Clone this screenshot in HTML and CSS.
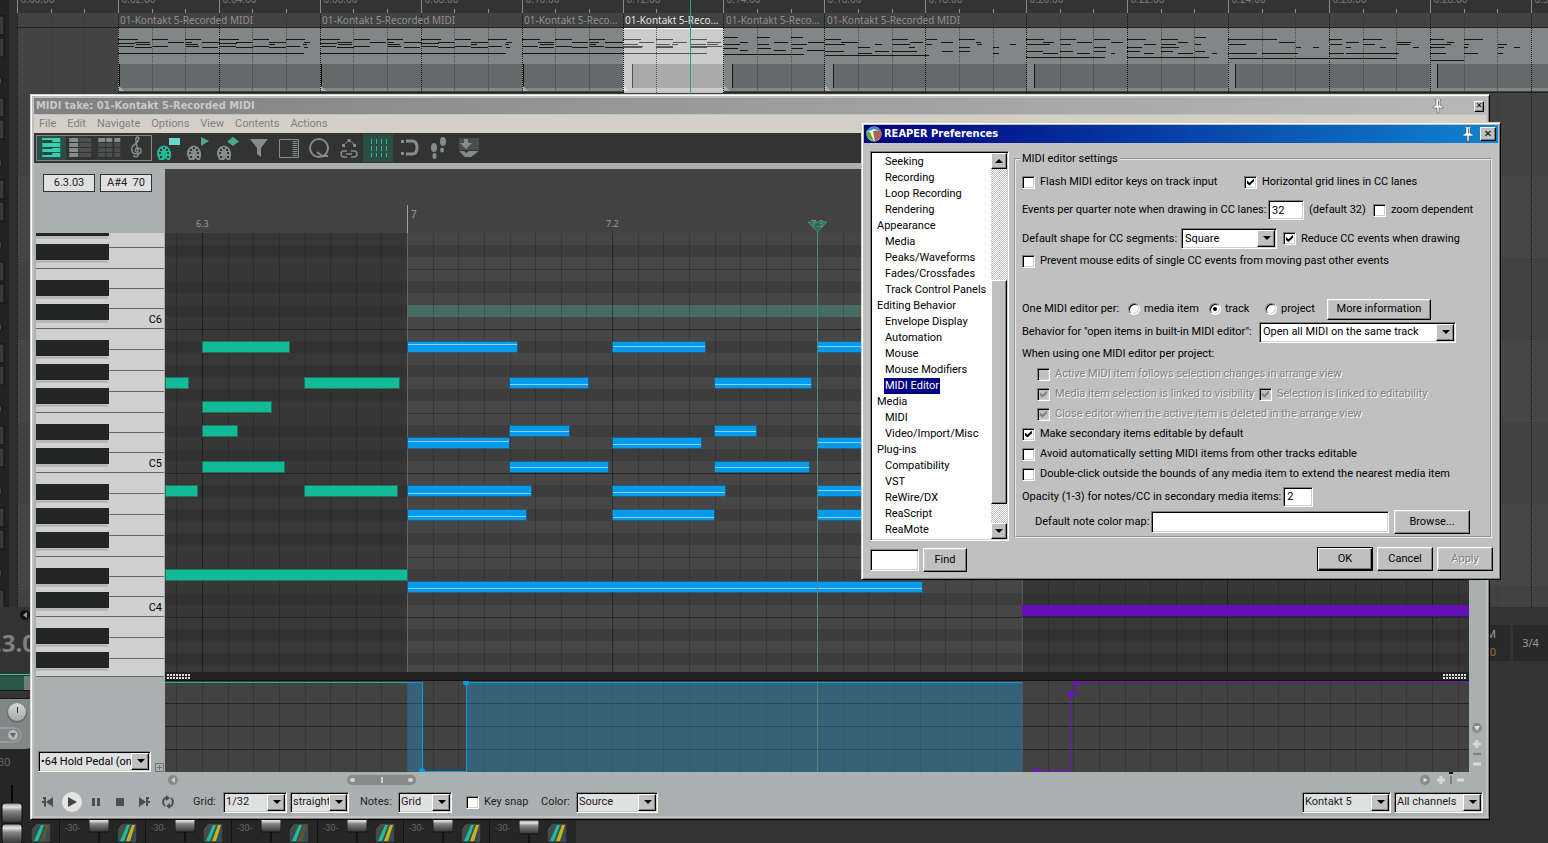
FILE: index.html
```html
<!DOCTYPE html>
<html lang="en">
<head>
<meta charset="utf-8">
<title>REAPER</title>
<link rel="stylesheet" href="styles.css">
</head>
<body>
<svg class="defs" width="0" height="0" aria-hidden="true">
  <defs>
    <linearGradient id="cap" x1="0" y1="0" x2="0" y2="1">
      <stop offset="0" stop-color="#8c8c8c"/><stop offset=".2" stop-color="#e6e6e6"/><stop offset=".4" stop-color="#8a8a8a"/>
      <stop offset=".6" stop-color="#6a6a6a"/><stop offset="1" stop-color="#333"/>
    </linearGradient>
    <linearGradient id="knob" x1="0" y1="0" x2="0" y2="1"><stop offset="0" stop-color="#d8d8d8"/><stop offset="1" stop-color="#a4a8a7"/></linearGradient>
    <symbol id="pin" viewBox="0 0 12 15"><path d="M3 0h6v1H8v5l3 2v1H7v5H5V9H1V8l3-2V1H3z" fill="#fff" stroke="#555" stroke-width=".6"/><path d="M6.500 1.500v5" stroke="#777"/></symbol>
    <symbol id="palette" viewBox="0 0 14 15"><path fill-rule="evenodd" d="M2 15l-1-3q-3-6 2-10 4-3 8 0 4 4 3 9l-1 4h-3l-1-2-2 2zM2 7h2v2H2zM3 4h2v2H3zM6 2h2v2H6zM9 4h2v2H9zM10 7h2v2h-2zM3 11h2v2H3zM10 11h2v2h-2z" fill="currentColor"/></symbol>
    <symbol id="routing" viewBox="0 0 20 20"><path d="M0 20V6l5-6h15v20z" fill="#444b4b" stroke="#111"/><path d="M10 2h3L7 18H3z" fill="#16c0a0"/><path d="M15 2h3L13 18H9z" fill="currentColor"/><path d="M18 6v9l-2 3h-2z" fill="#2f4d60"/></symbol>
    <symbol id="fader" viewBox="0 0 20 24"><path d="M10 0v24" stroke="#111" stroke-width="2"/><rect x="0" y="0" width="20" height="14" rx="1" fill="url(#cap)" stroke="#111"/></symbol>
  </defs>
</svg>

<main class="app">
  <div class="upper">
    <aside class="tcp" aria-label="Track panel"><svg class="fill" id="tcp"></svg></aside>
    <section class="arrange" aria-label="Arrange view"><svg class="fill" id="arrange"></svg></section>
  </div>
  <div class="lower">
    <aside class="master" aria-label="Master">
      <svg width="32" height="236">
        <circle cx="25" cy="8" r="5" fill="#111"/><path d="M27 5v6l-4-3z" fill="#999"/>
        <text x="-5" y="45" class="bigtime">.3.0</text>
        <path fill="#1bdc96" d="M0 67h32v1H0z"/><path fill="#2b5747" d="M0 69h24v14H0z"/><path fill="#747d7b" d="M24 69h8v14h-8z"/>
        <path fill="#181818" d="M0 83h32v1H0zM0 91h32v1H0z"/>
        <path fill="#262626" d="M0 142h32v94H0z"/><path fill="#808987" d="M0 92h32v45q-1 5-7 5H0z"/>
        <circle cx="17" cy="106" r="10" fill="#666d6c"/><circle cx="17" cy="105" r="9" fill="url(#knob)"/><path d="M17.500 100v6" stroke="#333"/>
        <path d="M0 121h14a7 7 0 0 1 0 14H0" fill="none" stroke="#a7aeac"/><circle cx="13" cy="128" r="5" fill="#b3b9b8"/><path d="M10 126h6l-3 5z" fill="#666"/>
        <text x="-2" y="159" class="dim">30</text>
        <path d="M12 178v20" stroke="#080808" stroke-width="2"/>
        <rect x="2" y="196" width="20" height="20" rx="3" fill="url(#cap)" stroke="#111"/><rect x="2" y="217" width="20" height="20" rx="3" fill="url(#cap)" stroke="#111"/>
      </svg>
    </aside>
    <div class="mixer" id="mixer"></div>
    <div class="signature"><div class="sigbox bpm">M<b>0</b></div><div class="sigbox">3/4</div></div>
  </div>

  <section class="window midi" aria-label="MIDI editor">
    <header class="titlebar inactive"><h1>MIDI take: 01-Kontakt 5-Recorded MIDI</h1><svg class="pin"><use href="#pin"/></svg><button class="close" aria-label="Close">✕</button></header>
    <nav class="menu"><a href="#">File</a><a href="#">Edit</a><a href="#">Navigate</a><a href="#">Options</a><a href="#">View</a><a href="#">Contents</a><a href="#">Actions</a></nav>
    <div class="tools">
      <div class="modes">
        <button class="on" aria-label="Piano roll"><svg viewBox="0 0 28 24"><path fill="#35d0b0" d="M5 2h18v19H5z"/><path fill="#24463f" d="M5 4h10v3H5zM5 11h10v2H5zM5 16h10v3H5zM15 6h8v1h-8zM15 11h8v1h-8zM15 16h8v1h-8z"/></svg></button>
        <button aria-label="Named notes"><svg viewBox="0 0 28 24"><path fill="#848d8b" d="M3 2h9v4H3zM3 7h9v4H3zM3 12h9v4H3zM3 17h9v4H3z"/><path fill="#4b4f4e" d="M13 2h12v4H13zM13 7h12v4H13zM13 12h12v4H13zM13 17h12v4H13z"/></svg></button>
        <button aria-label="Event list"><svg viewBox="0 0 28 24"><path fill="#848d8b" d="M4 2h7v4H4zM12 2h6v4h-6zM20 2h6v4h-6z"/><path fill="#4b4f4e" d="M4 7h7v4H4zM12 7h6v4h-6zM20 7h6v4h-6zM4 12h7v4H4zM12 12h6v4h-6zM20 12h6v4h-6zM4 17h7v4H4zM12 17h6v4h-6zM20 17h6v4h-6z"/></svg></button>
        <button aria-label="Notation"><svg viewBox="0 0 28 24"><path fill="none" stroke="#848d8b" stroke-width="1.500" d="M14 16c-3 0-2-4 0-4 5 0 5 6 0 6-7 0-7-7-2-10 3-2 5-7 2-7-4 0 2 15 1 18-1 3-5 2-4 0"/></svg></button>
      </div>
      <button class="green" aria-label="Color by velocity"><svg viewBox="0 0 30 28"><use href="#palette" x="4" y="11" width="14" height="15"/><path fill="#6ad8c4" d="M16 4h11v7H16z"/></svg></button>
      <button aria-label="Color by channel"><svg viewBox="0 0 30 28"><use href="#palette" x="4" y="11" width="14" height="15"/><path fill="#4ba68e" d="M18 3l8 4-8 5z"/></svg></button>
      <button aria-label="Color by pitch"><svg viewBox="0 0 30 28"><use href="#palette" x="4" y="11" width="14" height="15"/><path fill="#4ba68e" d="M20 3l6 4.500-6 4.500-6-4.500z"/></svg></button>
      <button aria-label="Filter"><svg viewBox="0 0 30 28"><path fill="currentColor" d="M7 5h18l-7 9v9l-4-3v-6z"/></svg></button>
      <button aria-label="Properties"><svg viewBox="0 0 30 28"><path fill="none" stroke="currentColor" d="M6.500 5.500h19v18h-19z"/><path stroke="currentColor" stroke-dasharray="1 1" stroke-width="5" d="M22 7v15"/></svg></button>
      <button aria-label="Quantize"><svg viewBox="0 0 30 28"><g fill="none" stroke="currentColor" stroke-width="2"><circle cx="16" cy="14" r="9"/><path d="M14 18l5 4h6"/></g></svg></button>
      <button aria-label="Humanize"><svg viewBox="0 0 30 28"><g fill="none" stroke="currentColor" stroke-width="1.500"><path d="M12 10l4-4 5 4" stroke-width="1"/><path d="M14 23h-3a3 3 0 0 1 0-6h3M18 17h3a3 3 0 0 1 0 6h-3M13 20h6"/></g><path fill="currentColor" d="M9 10h3v3H9zM14.500 5h3v3h-3zM20 10h3v3h-3z"/></svg></button>
      <button class="on" aria-label="Grid"><svg viewBox="0 0 30 28"><path fill="none" stroke="#20bd98" stroke-dasharray="5 2" d="M8.500 5v18M13.500 5v18M18.500 5v18M23.500 5v18"/></svg></button>
      <button aria-label="Snap"><svg viewBox="0 0 30 28"><path fill="none" stroke="currentColor" stroke-width="3" d="M13 7h6q5 0 5 6.500t-5 6.500h-6"/><path fill="currentColor" d="M8 6h3v3H8zM8 18h3v3H8z"/></svg></button>
      <button aria-label="Step input"><svg viewBox="0 0 30 28"><g fill="currentColor"><ellipse cx="11" cy="13.500" rx="3" ry="4.500"/><ellipse cx="11.500" cy="22" rx="2" ry="3"/><ellipse cx="20" cy="7.500" rx="3" ry="4.500"/><ellipse cx="19" cy="16" rx="2" ry="2.500"/></g></svg></button>
      <button aria-label="Dock"><svg viewBox="0 0 30 28"><path fill="#4a4d4d" d="M6 4h20v12H6z"/><path fill="currentColor" d="M11 5h4v4h4l-6 6-6-6h4zM6 17h5l2 2 3-2h10l-8 6h-6z"/></svg></button>
    </div>
    <div class="editor">
      <div class="side">
        <div class="readout"><output>6.3.03</output><output>A#4&nbsp; 70</output></div>
        <svg id="keys" width="129" height="444"></svg>
        <div class="lane"><span class="combo"><select aria-label="CC lane"><option>•64 Hold Pedal (on</option></select></span><svg width="9" height="9"><path d="M.5.5h8v8h-8zM4.500 2v5M2 4.500h5" fill="none" stroke="#6f7575"/></svg></div>
      </div>
      <div class="canvas">
        <svg id="roll" height="503"></svg>
        <div class="divider"><i></i><i></i></div>
        <svg id="cc" height="91"></svg>
        <div class="hscroll"><svg width="10" height="10"><circle cx="5" cy="5" r="5" fill="#858b8a"/><path d="M7 2v6L3 5z" fill="#cdd1d0"/></svg>
          <div class="thumb"><i></i><b></b><i></i></div>
          <svg class="zoomer" width="44" height="16"><circle cx="5" cy="8" r="5" fill="#858b8a"/><path d="M3.500 5.500v5L7.500 8z" fill="#dfe2e1"/><path d="M17 8h8M21 4v8M37 8h8" stroke="#d6d9d8" stroke-width="3"/><path d="M29 0h4v2h-4z" fill="#111"/><path d="M31 4v8" stroke="#7d8382" stroke-width="2"/></svg></div>
      </div>
      <div class="vscroll"><svg width="12" height="46"><circle cx="6" cy="5" r="5" fill="#858b8a"/><path d="M3 3h6L6 8z" fill="#dfe2e1"/><path d="M2 21h8M6 17v8M2 41h8" stroke="#d6d9d8" stroke-width="3"/><path d="M2 31h8" stroke="#7d8382" stroke-width="2"/></svg></div>
    </div>
    <footer class="bar">
      <div class="play">
        <button aria-label="Start"><svg viewBox="0 0 24 24"><path fill="#4b4f4f" d="M10 12l7-5v10zM10 7.500v9H8v-9zM7 7h3v2H7zM6 11h2v2H6z"/></svg></button>
        <button aria-label="Play"><svg viewBox="0 0 24 24"><circle cx="12" cy="12" r="10" fill="#e3e5e4"/><path fill="#444" d="M8 7l9 5-9 5z"/></svg></button>
        <button aria-label="Pause"><svg viewBox="0 0 24 24"><path fill="#4b4f4f" d="M8 8h3v8H8zM13 8h3v8h-3z"/></svg></button>
        <button aria-label="Stop"><svg viewBox="0 0 24 24"><path fill="#4b4f4f" d="M8 8h8v8H8z"/></svg></button>
        <button aria-label="End"><svg viewBox="0 0 24 24"><path fill="#4b4f4f" d="M7 7l7 5-7 5zM14 8h2v8h-2zM14 7h3v2h-3zM16 11h2v2h-2z"/></svg></button>
        <button aria-label="Repeat"><svg viewBox="0 0 24 24"><path fill="none" stroke="#4b4f4f" stroke-width="2" d="M9 16a5 5 0 0 1 1-8.500M15 8a5 5 0 0 1-1 8.500"/><path fill="#4b4f4f" d="M10 5l4 3-4 3zM14 13v6l-4-3z"/></svg></button>
      </div>
      <label class="l-grid" for="g">Grid:</label><span class="combo w63"><select id="g"><option>1/32</option></select></span>
      <span class="combo w59"><select aria-label="Grid type"><option>straight</option></select></span>
      <label class="l-notes" for="n">Notes:</label><span class="combo w54"><select id="n"><option>Grid</option></select></span>
      <label class="check snap"><input type="checkbox">Key snap</label>
      <label class="l-color" for="c">Color:</label><span class="combo w82"><select id="c"><option>Source</option></select></span>
      <span class="combo w89 push"><select aria-label="Track"><option>Kontakt 5</option></select></span>
      <span class="combo w89"><select aria-label="Channel"><option>All channels</option></select></span>
    </footer>
  </section>

  <section class="window prefs" role="dialog" aria-label="REAPER Preferences">
    <header class="titlebar"><svg class="logo" viewBox="0 0 16 16"><circle cx="8" cy="8" r="7.500" fill="#e8f0f0"/><path fill="#2e8fc4" d="M1 4q7-7 14 0l-1 1-6-2-5 2z"/><path fill="#5cae2c" d="M0 5l4 1 4 9.500Q0 14 0 5z"/><path fill="#b0605a" d="M7 5l8-1q3 8-6 11.500z"/></svg><h2>REAPER Preferences</h2><svg class="pin"><use href="#pin"/></svg><button class="close" aria-label="Close">✕</button></header>
    <div class="content">
      <div class="tree">
        <ul>
          <li class="sub"><a href="#">Seeking</a></li><li class="sub"><a href="#">Recording</a></li><li class="sub"><a href="#">Loop Recording</a></li><li class="sub"><a href="#">Rendering</a></li>
          <li><a href="#">Appearance</a></li><li class="sub"><a href="#">Media</a></li><li class="sub"><a href="#">Peaks/Waveforms</a></li><li class="sub"><a href="#">Fades/Crossfades</a></li><li class="sub"><a href="#">Track Control Panels</a></li>
          <li><a href="#">Editing Behavior</a></li><li class="sub"><a href="#">Envelope Display</a></li><li class="sub"><a href="#">Automation</a></li><li class="sub"><a href="#">Mouse</a></li><li class="sub"><a href="#">Mouse Modifiers</a></li><li class="sub"><a href="#" class="selected">MIDI Editor</a></li>
          <li><a href="#">Media</a></li><li class="sub"><a href="#">MIDI</a></li><li class="sub"><a href="#">Video/Import/Misc</a></li>
          <li><a href="#">Plug-ins</a></li><li class="sub"><a href="#">Compatibility</a></li><li class="sub"><a href="#">VST</a></li><li class="sub"><a href="#">ReWire/DX</a></li><li class="sub"><a href="#">ReaScript</a></li><li class="sub"><a href="#">ReaMote</a></li>
        </ul>
        <div class="scrollbar"><button class="up" aria-label="Up"></button><div class="grip"></div><button class="down" aria-label="Down"></button></div>
      </div>
      <fieldset>
        <legend>MIDI editor settings</legend>
        <div class="row two"><label class="check"><input type="checkbox">Flash MIDI editor keys on track input</label><label class="check"><input type="checkbox" checked>Horizontal grid lines in CC lanes</label></div>
        <div class="row tall events"><label for="ev">Events per quarter note when drawing in CC lanes:</label><input class="text" id="ev" value="32"><span class="hint">(default 32)</span><label class="check"><input type="checkbox">zoom dependent</label></div>
        <div class="row shape"><label for="sh">Default shape for CC segments:</label><span class="combo"><select id="sh"><option>Square</option></select></span><label class="check"><input type="checkbox" checked>Reduce CC events when drawing</label></div>
        <div class="row spaced"><label class="check"><input type="checkbox">Prevent mouse edits of single CC events from moving past other events</label></div>
        <div class="row per"><span>One MIDI editor per:</span><label class="radio"><input type="radio" name="per">media item</label><label class="radio"><input type="radio" name="per" checked>track</label><label class="radio"><input type="radio" name="per">project</label><button class="btn">More information</button></div>
        <div class="row behavior"><label for="bh">Behavior for "open items in built-in MIDI editor":</label><span class="combo"><select id="bh"><option>Open all MIDI on the same track</option></select></span></div>
        <div class="row">When using one MIDI editor per project:</div>
        <div class="row indent"><label class="check off"><input type="checkbox" disabled>Active MIDI item follows selection changes in arrange view</label></div>
        <div class="row indent two"><label class="check off"><input type="checkbox" checked disabled>Media item selection is linked to visibility</label><label class="check off"><input type="checkbox" checked disabled>Selection is linked to editability</label></div>
        <div class="row indent"><label class="check off"><input type="checkbox" checked disabled>Close editor when the active item is deleted in the arrange view</label></div>
        <div class="row"><label class="check"><input type="checkbox" checked>Make secondary items editable by default</label></div>
        <div class="row"><label class="check"><input type="checkbox">Avoid automatically setting MIDI items from other tracks editable</label></div>
        <div class="row"><label class="check"><input type="checkbox">Double-click outside the bounds of any media item to extend the nearest media item</label></div>
        <div class="row mid opacity"><label for="op">Opacity (1-3) for notes/CC in secondary media items:</label><input class="text" id="op" value="2"></div>
        <div class="row mid map"><label for="cm">Default note color map:</label><input class="text" id="cm"><button class="btn">Browse...</button></div>
      </fieldset>
    </div>
    <footer class="actions"><input class="text find" aria-label="Find text"><button class="btn findbtn">Find</button><button class="btn default">OK</button><button class="btn">Cancel</button><button class="btn" disabled>Apply</button></footer>
  </section>
</main>
<script src="app.js"></script>
</body>
</html>
```
FILE: styles.css
```css
* { box-sizing: border-box; }
body { margin: 0; background: #333; font: 11px/14px Roboto, "Liberation Sans", sans-serif; color: #000; }
button, select, input { font: inherit; color: inherit; margin: 0; }
a { color: inherit; text-decoration: none; }
svg { display: block; }
.defs { position: absolute; }
.app { position: relative; min-height: 100vh; display: flex; flex-direction: column; overflow: hidden; }
.upper { display: flex; flex: 1; min-height: 607px; }
.tcp { width: 17px; background: #2e2e2e; }
.arrange { flex: 1; min-width: 0; background: #434343; }
.fill { width: 100%; height: 100%; }
.lower { display: flex; height: 236px; background: #333; }
.master { width: 31px; overflow: hidden; }
.mixer { align-self: flex-end; display: flex; height: 24px; }
.bigtime { font: bold 24px "Noto Sans", sans-serif; fill: #808080; }
.dim { font: 11px Roboto, sans-serif; fill: #666; }
.strip { display: flex; align-items: flex-start; gap: 6px; width: 86px; height: 24px; background: #262626; border-top: 1px solid #111; color: #666; font: 9px/14px Roboto, sans-serif; }
.strip span { width: 24px; padding: 1px 0 0 5px; margin-left: 2px; border-left: 1px solid #111; height: 24px; white-space: nowrap; }
.strip.end { width: 29px; }
.routing { color: #c6b41c; }
.muted .routing { color: #5a5634; }
.signature { margin-left: auto; display: flex; gap: 3px; padding-top: 18px; color: #999; font: 11px/36px "Noto Sans", sans-serif; }
.sigbox { width: 35px; height: 36px; background: #292929; text-align: center; }
.bpm { width: 20px; text-align: left; line-height: 18px; overflow: hidden; direction: rtl; padding-right: 14px; }
.bpm b { display: block; color: #a66a30; font-weight: 400; }

.window { position: absolute; border: 1px solid; border-color: #d4d0c8 #000 #000 #d4d0c8; background: #c0c0c0; box-shadow: inset 1px 1px #fff, inset -1px -1px #808080; }
.titlebar { display: flex; align-items: center; height: 18px; padding: 0 2px; color: #fff; background: linear-gradient(90deg, #000080, #1084d0); }
.titlebar h1, .titlebar h2 { margin: 0; flex: 1; font: bold 11px/16px "DejaVu Sans Condensed", "DejaVu Sans", sans-serif; }
.titlebar.inactive { height: 16px; color: #c8c8c8; background: linear-gradient(90deg, #808080, #b8b8b8); }
.pin { width: 12px; height: 15px; margin-right: 6px; }
.inactive .pin { margin-right: 30px; }
.logo { width: 16px; height: 16px; margin-right: 2px; }
.close { width: 16px; height: 14px; padding: 0; font: bold 10px/10px "DejaVu Sans", sans-serif; color: #000; background: #c0c0c0; border: 1px solid; border-color: #fff #000 #000 #fff; box-shadow: inset -1px -1px #808080; }
.inactive .close { width: 10px; height: 11px; font-size: 8px; line-height: 8px; }

.midi { left: 30px; top: 94px; right: 58px; padding: 3px; background: #c0c0c0; }
.menu { display: flex; gap: 11px; height: 19px; padding: 0 5px; background: #d4d0c8; color: #808080; line-height: 17px; border-top: 1px solid #c0c0c0; }
.tools { display: flex; align-items: center; height: 30px; padding-left: 2px; background: #333; color: #848d8b; }
.tools button { width: 30px; height: 28px; padding: 0; border: 0; background: none; }
.tools svg { width: 100%; height: 100%; }
.tools .on { background: #2b4d46; }
.tools .green { color: #1fbb97; }
.modes { display: flex; width: 116px; height: 26px; margin-right: 1px; border: 1px solid #7f8a88; }
.tools .modes button { flex: 1; width: auto; height: 24px; }
.editor { display: grid; grid-template-columns: 129px 1fr 17px; padding: 6px 0 0 2px; background: #aab0b0; }
.side { display: flex; flex-direction: column; min-width: 0; }
.readout { display: flex; gap: 5px; height: 64px; padding: 5px 7px; }
.readout output { width: 52px; height: 18px; border: 1px solid #333; background: #dfe1e0; text-align: center; line-height: 16px; white-space: pre; color: #222; }
.lane { display: flex; gap: 4px; align-items: flex-end; margin-top: auto; padding: 0 0 16px 2px; }
.lane .combo { width: 113px; }
.canvas { min-width: 0; }
#roll, #cc { width: 100%; background: #424242; }
.divider { display: flex; justify-content: space-between; align-items: center; height: 9px; padding: 0 2px; background: #222; border-bottom: 1px solid #111; }
.divider i { width: 24px; height: 5px; background: repeating-linear-gradient(90deg, transparent 0 2px, #222 2px 3px), linear-gradient(#ddd 2px, #222 2px 3px, #ddd 3px); }
.hscroll { display: flex; align-items: center; height: 16px; padding: 0 5px 0 3px; }
.thumb { display: flex; align-items: center; justify-content: space-between; width: 69px; height: 10px; margin-left: 169px; padding: 0 3px; border-radius: 5px; background: #858b8a; }
.thumb i { width: 5px; height: 4px; border-radius: 2px; background: #d0d3d2; }
.thumb b { width: 2px; height: 6px; background: #d0d3d2; }
.zoomer { margin-left: auto; }
.vscroll { display: flex; align-items: flex-end; padding: 0 0 19px 2px; }
.bar { display: flex; align-items: center; height: 28px; padding: 0 0 0 2px; background: #aab0b0; color: #222; white-space: nowrap; }
.play { display: flex; }
.play button { width: 24px; height: 24px; padding: 0; border: 0; background: none; }
.l-grid { width: 43px; padding-left: 13px; }
.l-notes { width: 46px; padding-left: 8px; }
.l-color { width: 47px; padding-left: 12px; }
.snap { width: 63px; margin-left: 14px; }
.bar .combo { margin-right: 3px; }
.bar .combo.w54 { margin-right: 0; }
.w63 { width: 64px; } .w59 { width: 59px; } .w54 { width: 54px; } .w82 { width: 82px; } .w89 { width: 89px; }
.bar .push { margin-left: auto; }

.combo { position: relative; display: inline-block; height: 21px; }
.combo select, .text { width: 100%; height: 100%; appearance: none; border-radius: 0; border: 1px solid; border-color: #808080 #fff #fff #808080; box-shadow: inset 1px 1px #000, inset -1px -1px #d4d0c8; background: #fff; padding: 0 17px 0 3px; overflow: hidden; }
.midi .combo select { background: #dfe1e0; padding: 0 14px 0 2px; }
.combo::before { content: ""; position: absolute; right: 2px; top: 2px; bottom: 2px; width: 16px; background: #c0c0c0; border: 1px solid; border-color: #fff #000 #000 #fff; box-shadow: inset -1px -1px #808080; pointer-events: none; }
.combo::after { content: ""; position: absolute; right: 6px; top: 8px; border: 4px solid transparent; border-top-color: #000; border-bottom: 0; pointer-events: none; }
.text { width: auto; height: 20px; padding: 0 3px; }
.check, .radio { display: flex; align-items: center; gap: 5px; white-space: nowrap; }
.radio { gap: 4px; }
.check input, .radio input { flex: none; appearance: none; width: 13px; height: 13px; background: #fff; border: 1px solid; border-color: #808080 #fff #fff #808080; box-shadow: inset 1px 1px #000, inset -1px -1px #d4d0c8; }
.check input:checked::before { content: ""; display: block; width: 7px; height: 7px; margin: 2px; background: #000; clip-path: polygon(0 30%, 35% 60%, 100% 0, 100% 40%, 35% 100%, 0 70%); }
.check input:disabled { background: #c0c0c0; }
.check input:disabled:checked::before { background: #808080; }
.radio input { width: 12px; height: 12px; border-radius: 50%; }
.radio input:checked::before { content: ""; display: block; width: 4px; height: 4px; margin: 3px; border-radius: 50%; background: #000; }
.off { color: #808080; text-shadow: 1px 1px #fff; }
.btn { height: 24px; padding: 0; background: #c0c0c0; border: 1px solid; border-color: #fff #000 #000 #fff; box-shadow: inset -1px -1px #808080, inset 1px 1px #d4d0c8; }
.btn:disabled { color: #808080; text-shadow: 1px 1px #fff; }
.default { border: 1px solid #000; box-shadow: inset 1px 1px #fff, inset -1px -1px #000, inset -2px -2px #808080; }

.prefs { left: 861px; top: 122px; width: 640px; padding: 2px; }
.content { display: grid; grid-template-columns: 139px 1fr; gap: 5px; padding: 8px 6px 0; }
.tree { display: flex; justify-content: space-between; height: 390px; padding: 1px; background: #fff; border: 1px solid; border-color: #808080 #fff #fff #808080; box-shadow: inset 1px 1px #000, inset -1px -1px #d4d0c8; }
.tree ul { list-style: none; margin: 0; padding: 1px 0 0 4px; line-height: 16px; white-space: nowrap; }
.tree li { height: 16px; }
.tree .sub { padding-left: 8px; }
.tree a { display: inline-block; padding: 0 1px; }
.tree .selected { background: #000080; color: #fff; }
.scrollbar { display: flex; flex-direction: column; width: 16px; background: repeating-conic-gradient(#c0c0c0 0 25%, #fff 0 50%) 0 0 / 2px 2px; }
.scrollbar button, .grip { width: 16px; height: 16px; padding: 0; background: #c0c0c0; border: 1px solid; border-color: #fff #000 #000 #fff; box-shadow: inset -1px -1px #808080; }
.scrollbar button::before { content: ""; display: block; width: 0; margin: auto; border: 4px solid transparent; }
.scrollbar .up::before { border-bottom-color: #000; border-top: 0; }
.scrollbar .down::before { border-top-color: #000; border-bottom: 0; }
.scrollbar .grip { height: 224px; margin: 111px 0 auto; }
fieldset { min-width: 0; height: 387px; margin: 0; padding: 5px 6px 0; border: 2px groove #e8e8e8; }
legend { padding: 0 2px; margin-left: -2px; height: 16px; line-height: 16px; }
.row { display: grid; align-items: center; justify-content: start; height: 20px; white-space: nowrap; }
.two { grid-template-columns: 222px auto; }
.tall { height: 36px; }
.events { grid-template-columns: 246px 36px 69px auto; }
.hint { padding-left: 5px; }
.shape { grid-template-columns: 159px 96px auto; }
.shape .check { margin-left: 6px; }
.spaced { height: 26px; margin-bottom: 24px; }
.per { grid-template-columns: 106px 81px 56px 62px 104px; height: 22px; }
.per .btn { height: 21px; }
.behavior { grid-template-columns: 237px 197px; height: 24px; }
.indent { padding-left: 15px; }
.mid { height: 25px; }
.opacity { grid-template-columns: max-content 30px; gap: 2px; }
.map { padding-left: 13px; grid-template-columns: 116px 1fr 76px; justify-content: stretch; padding-right: 14px; }
.map .text { height: 22px; margin-right: 5px; min-width: 0; }
.actions { display: flex; align-items: flex-start; gap: 4px; padding: 6px 5px 5px 6px; }
.actions .btn { width: 56px; }
.actions .find, .actions .findbtn { margin-top: 1px; }
.actions .findbtn { width: 44px; margin-right: auto; }
.actions .find { width: 49px; height: 22px; margin-top: 2px; }
```
FILE: app.js
```js
const el = id => document.getElementById(id);
const rect = (x, y, w, h, fill, extra = '') => `<rect x="${x}" y="${y}" width="${w}" height="${h}" fill="${fill}" ${extra}/>`;
const line = (x1, y1, x2, y2, c, extra = '') => `<path d="M${x1} ${y1}L${x2} ${y2}" stroke="${c}" ${extra}/>`;

/* Track panel: one button pair and one knob per track */
let s = rect(0, 0, 9, '100%', '#222');
for (let y = 16; y < 600; y += 82) {
  s += rect(-3, y, 7, 19, '#3a3a3a', 'stroke="#111"') + rect(-3, y + 22, 7, 19, '#3a3a3a', 'stroke="#111"');
  s += `<circle cx="-3" cy="${y + 65}" r="5" fill="#444" stroke="#111"/>`;
}
el('tcp').innerHTML = s;

/* Arrange view, origin at the left edge of the timeline */
const X0 = 17, BEAT = 33.64;
s = '';
for (let y = 94, i = 0; y < 607; y += 82, i++) s += rect(0, y, '100%', 82, i % 2 ? '#464646' : '#424242');
s += rect(0, 0, '100%', 13, '#333') + rect(0, 13, '100%', 14, '#424242');
const items = [[118, 202, '01-Kontakt 5-Recorded MIDI', 119], [320, 202, '01-Kontakt 5-Recorded MIDI', 321], [522, 101, '01-Kontakt 5-Reco...', 523],
  [623, 101, '01-Kontakt 5-Reco...', 632], [724, 101, '01-Kontakt 5-Reco...', 732], [825, 1400, '01-Kontakt 5-Recorded MIDI', 833]];
s += rect(101, 27, '100%', 65, '#7f8886');
items.forEach(([x, w, t, cc], i) => {
  const sel = i === 3;
  x -= X0;
  if (sel) s += rect(x, 27, w, 66, '#cbcccb');
  s += rect(cc - X0, 64, w - (cc - X0 - x), 24, sel ? '#a9aaa9' : '#646a69') + rect(cc - X0, 64, 1, 24, sel ? '#555' : '#151515');
  s += `<path d="M${x} 92v-7l7 7z" fill="${sel ? '#e6e6e6' : '#aab0af'}"/>`;
});
[1027, 1228, 1430].forEach(x => { s += rect(x - X0, 64, 7, 24, '#7f8886') + rect(x + 7 - X0, 64, 1, 24, '#151515'); });
const loop = '39:0-20,34-50,67-83,101-121,135-151,168-187;42:17-32,50-66,67-74,84-101,118-135,151-168,186-192;43:0-17,101-119;44:18-32,67-80,151-157,185-189;46:0-16,34-50,67-81,101-118,135-151,168-182;47:17-34,84-100,118-135,151-168,186-190;53:0-186';
const short = '39:0-18,33-50,67-83;42:16-32,50-66,67-77,83-101;44:18-32,67-74;46:0-16,33-50,67-82;47:17-32,50-66,83-101;53:0-101';
const sel = '39:0-18,33-50,67-84;42:16-31,50-64,84-98;44:0-15,33-47,49-55,67-83,84-95;46:0-20,33-50,67-85,84-99;47:0-19,33-50,67-84;53:0-84';
const next = '37:0-14,33-46,67-79;42:16-24,50-64,84-100;44:0-16,33-45,67-83;48:0-14,33-47,67-79;50:16-24,50-62,83-101;54:0-80';
const tail = '39:0-16,67-83,101-112,134-150;42:16-33,85-98,116-128,151-156;44:0-20,50-57,67-85,101-107,152-157,185-191;47:33-45,84-90,134-145,168-174;51:0-19,50-64,67-92,117-128,134-145;53:33-47,168-174;55:0-104';
const far = '39:0-18,34-50,68-84,101-120,135-152,202-251,303-316,337-356,404-418,438-457;42:17-28,51-66,85-97,152-162,253-269,320-333,371-385,421-428;37:169-180;44:0-24,34-45,118-130,135-150,169-175,202-220,303-316,337-349,371-384,404-425,438-443,472-481;47:68-80,101-116,135-153,270-275,287-293,320-325,354-360,387-393,404-419,438-442,472-478,488-494;51:0-17,34-47,68-80,101-114,135-147,169-179;53:17-32,51-64,85-89,118-128,152-167,186-191,202-231,236-272,303-318,320-373,404-420,438-452,472-477;57:0-79,101-183;58:202-370;60:404-438';
[[118, loop], [320, loop], [522, short], [623, sel], [724, next], [825, tail], [1026, far]].forEach(([x, data]) =>
  data.split(';').forEach(r => {
    const [y, segs] = r.split(':');
    segs.split(',').forEach(g => { const [a, b] = g.split('-').map(Number); s += rect(x + a - X0, y, b - a, 1, data === sel ? '#555' : '#151515'); });
  }));
s += rect(0, 27, '100%', 1, '#252525') + rect(101, 91, '100%', 1, '#444') + rect(101, 92, '100%', 1, '#222');
s += rect(607, 28, 100, 1, '#fff') + rect(607, 91, 100, 2, '#fff', 'fill-opacity=".7"');
for (let k = 0; k < 60; k++) {
  const x = Math.round(k * BEAT) + .5, major = k % 3 === 0;
  s += line(x, major ? 0 : 9, x, 13, '#8a8a8a');
  s += line(x, 14, x, 607, major ? '#111' : '#333', `stroke-dasharray="1 1" opacity="${major ? 1 : .7}"`);
  if (major) { const t = k / 3 * 2; s += `<text x="${x + 3}" y="3" class="rule">0:${String(t).padStart(2, '0')}.00</text>`; }
}
items.forEach(([x, , t], i) => { s += `<text x="${x + 2 - X0}" y="24" class="item${i === 3 ? ' sel' : ''}">${t}</text>`; });
s += rect(673, 0, 1, 95, '#2a9d88');
el('arrange').innerHTML = `<style>.rule{font:10px "Noto Sans",sans-serif;fill:#777}.item{font:10px "Noto Sans",sans-serif;fill:#909090}.item.sel{fill:#e4e4e4}</style>` + s;

/* Keyboard */
const OFFSET = 233;
s = rect(0, 0, 128, 444, '#d0d0d0');
[268, 328, 412, 472, 556, 616, 676].forEach(y => s += rect(0, y - OFFSET, 128, 1, '#666'));
[247, 288, 308, 349, 370, 391, 432, 452, 493, 514, 535, 576, 596, 637, 658].forEach(y => s += rect(73, y - OFFSET, 55, 1, '#666'));
[220, 244, 280, 304, 340, 364, 388, 424, 448, 484, 508, 532, 568, 592, 628, 652].forEach(y => s += rect(0, y - OFFSET, 72, 19, '#b8b8b8') + rect(0, y - OFFSET, 73, 16, '#242626'));
[['C6', 323], ['C5', 467], ['C4', 611]].forEach(([t, y]) => s += `<text x="126" y="${y - OFFSET}" text-anchor="end">${t}</text>`);
el('keys').innerHTML = s;

/* Piano roll; x is measured from the left edge of the canvas */
const L = 165, gridX = k => Math.round(407 + 25.625 * k - L) + .5;
const octave = (id, a, b) => `<pattern id="${id}" width="10" height="144" y="160" patternUnits="userSpaceOnUse">${rect(0, 0, 10, 144, a)}` +
  [12, 36, 60, 96, 120].map(y => rect(0, y, 10, 12, b)).join('') + rect(0, 0, 10, 1, '#262626') + rect(0, 84, 10, 1, '#333') + '</pattern>';
s = `<defs>${octave('lit', '#464646', '#3d3d3d')}${octave('shade', '#373737', '#323232')}</defs>`;
s += rect(0, 64, '100%', 439, 'url(#shade)') + rect(242, 64, 615, 439, 'url(#lit)');
s += rect(242, 136, 615, 12, '#476a62');
for (let k = -9; k < 60; k++) s += line(gridX(k), 64, gridX(k), 503, '#000', `stroke-opacity="${k % 8 ? .18 : .4}"`);
s += rect(242, 36, 1, 467, '#666') + rect(857, 64, 1, 439, '#555') + rect(242, 36, 1, 28, '#a0a0a0');
const green = [[202, 290, 341], [165, 189, 377], [304, 400, 377], [202, 272, 401], [202, 238, 425], [202, 285, 461], [165, 198, 485], [304, 398, 485], [165, 408, 569]];
green.forEach(([a, b, y]) => s += rect(a - L + .5, y - 168.5, b - a - 1, 11, '#11bb97', 'stroke="#276e5e"'));
const blue = [[407, 518, 341, 3], [612, 706, 341, 5], [817, 900, 341, 5], [509, 589, 377, 7], [714, 812, 377, 7], [509, 570, 425, 6], [714, 757, 425, 6],
  [407, 510, 437, 4], [612, 702, 437, 7], [817, 900, 437, 5], [509, 609, 461, 6], [714, 810, 461, 6], [407, 532, 485, 8], [612, 726, 485, 7], [817, 900, 485, 5],
  [407, 527, 509, 7], [612, 715, 509, 8], [817, 900, 509, 8], [407, 923, 581, 7]];
blue.forEach(([a, b, y, v]) => s += rect(a - L + .5, y - 168.5, b - a - 1, 11, '#049cea', 'stroke="#225d80"') + rect(a - L + 1, y - 169 + v, b - a - 2, 1, '#8fd2f4'));
s += rect(857, 436, '100%', 11, '#6410b8') + rect(857, 447, '100%', 1, '#3c1a60');
s += '<g font-family="Noto Sans, sans-serif" font-size="10" fill="#999"><text x="31" y="58" font-size="9">6.3</text><text x="246" y="49">7</text><text x="441" y="58" font-size="9">7.2</text><text x="646" y="58" font-size="9">7.3</text></g>';
s += '<path d="M643 53h19l-9.500 10z" fill="#2a9d88" fill-opacity=".4" stroke="#2a9d88"/>' + line(652.5, 63, 652.5, 503, '#4c8a80');
el('roll').innerHTML = s;

/* Pedal lane */
s = '';
for (let k = -9; k < 60; k++) s += line(gridX(k), 0, gridX(k), 91, '#000', 'stroke-opacity=".18"');
[22, 45, 68].forEach(y => s += rect(0, y, '100%', 1, '#222'));
s += rect(242, 1, 15, 90, '#2787b8', 'fill-opacity=".45"') + rect(301, 1, 556, 90, '#2787b8', 'fill-opacity=".45"');
s += rect(0, 1, 242, 1, '#11bb97');
s += '<path d="M242 1.500h15.500v89h44v-89h555" fill="none" stroke="#049cea"/><circle cx="257" cy="90" r="3" fill="#049cea"/><circle cx="301" cy="1.500" r="3" fill="#049cea"/>';
s += '<path d="M871 90.500h35v-77h5v-12H1900" fill="none" stroke="#7012c4"/><circle cx="871" cy="90" r="3" fill="#7012c4"/><circle cx="906" cy="13" r="3" fill="#7012c4"/><circle cx="911" cy="1.500" r="3" fill="#7012c4"/>';
s += rect(857, 0, 1, 91, '#555') + line(652.5, 0, 652.5, 91, '#4c8a80');
el('cc').innerHTML = s;

/* Mixer strips */
let m = '';
for (let i = 0; i < 7; i++) {
  m += `<div class="strip${i % 3 ? '' : ' muted'}${i === 6 ? ' end' : ''}"><svg class="routing" width="20" height="24"><use href="#routing" x="0" y="3" width="20" height="20"/></svg>` +
    (i === 6 ? '' : `<span>-30-</span><svg width="20" height="24"><use href="#fader" x="0" y="${i === 5 ? 0 : -2}" width="20" height="24"/></svg>`) + '</div>';
}
el('mixer').innerHTML = m.replace('muted end', 'end');
```
